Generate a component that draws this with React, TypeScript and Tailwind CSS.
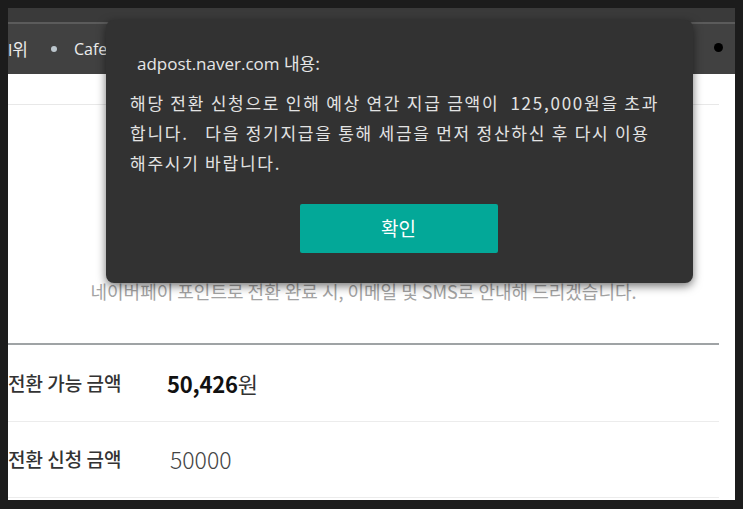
import React from "react";

const KR = { fontFamily: '"Noto Sans CJK KR", "Noto Sans", sans-serif' };

export default function App() {
  return (
    <div className="w-[743px] h-[509px] bg-[#1c1c1c] pt-[8px] pl-[8px] pr-[8px] pb-[9px]" style={KR}>
      <div className="relative w-[727px] h-[492px] overflow-hidden bg-white flex flex-col">
        {/* browser header */}
        <div className="h-[14px] bg-[#3a3a3a]" />
        <div className="h-[2px] bg-[#5b5b5b]" />
        <div className="h-[50px] bg-[#414141] flex items-center relative">
          <span className="text-[17px] text-[#ececec] whitespace-nowrap leading-none" style={{ fontFamily: '"Open Sans", "Noto Sans CJK KR", sans-serif' }}>
            l<span style={KR}>위</span>
          </span>
          <span className="ml-[23px] w-[6px] h-[6px] rounded-full bg-[#bcc6cd]" />
          <span className="ml-[17px] text-[16px] text-[#ececec] leading-none" style={{ fontFamily: '"Open Sans", "Noto Sans", sans-serif' }}>Cafe</span>
          <span className="absolute left-[706px] top-[19px] w-[9px] h-[9px] rounded-full bg-black" />
        </div>
        {/* page content */}
        <div className="w-[711px] flex flex-col">
          <div className="h-[31px] border-b border-[#e8e8e8]" />
          <div className="h-[238px] flex items-end justify-center pb-[43px]">
            <p className="text-[18px] text-[#a3a3a3] leading-none whitespace-nowrap">
              네이버페이 포인트로 전환 완료 시, 이메일 및 SMS로 안내해 드리겠습니다.
            </p>
          </div>
          <div className="h-[2px] bg-[#9fa3a5]" />
          <div className="h-[77px] flex items-center border-b border-[#ececec]">
            <span className="w-[159px] text-[19px] font-medium text-[#333]">전환 가능 금액</span>
            <span className="text-[22px] text-[#111] tracking-[-0.2px]">
              <b className="font-bold">50,426</b>
              <span className="font-normal text-[#333]">원</span>
            </span>
          </div>
          <div className="h-[76px] flex items-center border-b border-[#ececec]">
            <span className="w-[162px] text-[19px] font-medium text-[#333]">전환 신청 금액</span>
            <span className="text-[23px] font-light text-[#444]">50000</span>
          </div>
        </div>

        {/* alert dialog */}
        <div className="absolute left-[98px] top-[12px] w-[587px] h-[263px] bg-[#323232] rounded-[8px] shadow-[0_3px_10px_rgba(0,0,0,0.55)] flex flex-col">
          <div className="pl-[31px] pt-[32px] text-[17px] text-[#e6e6e6] leading-[22px]" style={{ fontFamily: '"Open Sans", "Noto Sans CJK KR", sans-serif' }}>
            adpost.naver.com <span style={KR}>내용:</span>
          </div>
          <div className="pl-[24px] pt-[13px] text-[17px] tracking-[1.75px] text-[#e3e3e3] leading-[30px] whitespace-pre">
            {"해당 전환 신청으로 인해 예상 연간 지급 금액이  125,000원을 초과\n합니다.   다음 정기지급을 통해 세금을 먼저 정산하신 후 다시 이용\n해주시기 바랍니다."}
          </div>
          <div className="flex justify-center mt-[26px]">
            <div className="ml-[-2px] w-[198px] h-[49px] bg-[#03a898] rounded-[2px] flex items-center justify-center text-[19px] text-white">
              확인
            </div>
          </div>
        </div>
      </div>
    </div>
  );
}
